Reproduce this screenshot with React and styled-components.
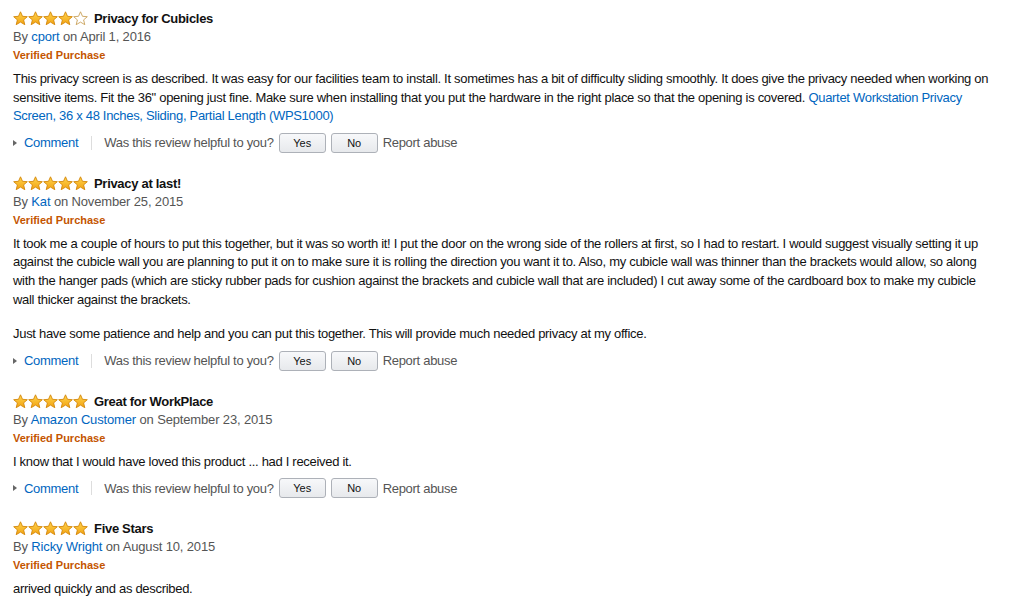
import React from "react";
import styled, { createGlobalStyle } from "styled-components";

const GlobalStyle = createGlobalStyle`
  body {
    margin: 0;
    background: #fff;
    font-family: "Liberation Sans", Arial, sans-serif;
  }
`;

// each paragraph is a list of lines, each line a list of parts (text or link)
const reviews = [
  {
    rating: 4,
    title: "Privacy for Cubicles",
    author: "cport",
    date: "April 1, 2016",
    body: [
      [
        ["This privacy screen is as described. It was easy for our facilities team to install. It sometimes has a bit of difficulty sliding smoothly. It does give the privacy needed when working on"],
        [
          'sensitive items. Fit the 36" opening just fine. Make sure when installing that you put the hardware in the right place so that the opening is covered. ',
          { link: "Quartet Workstation Privacy" },
        ],
        [{ link: "Screen, 36 x 48 Inches, Sliding, Partial Length (WPS1000)" }],
      ],
    ],
  },
  {
    rating: 5,
    title: "Privacy at last!",
    author: "Kat",
    date: "November 25, 2015",
    body: [
      [
        ["It took me a couple of hours to put this together, but it was so worth it! I put the door on the wrong side of the rollers at first, so I had to restart. I would suggest visually setting it up"],
        ["against the cubicle wall you are planning to put it on to make sure it is rolling the direction you want it to. Also, my cubicle wall was thinner than the brackets would allow, so along"],
        ["with the hanger pads (which are sticky rubber pads for cushion against the brackets and cubicle wall that are included) I cut away some of the cardboard box to make my cubicle"],
        ["wall thicker against the brackets."],
      ],
      [["Just have some patience and help and you can put this together. This will provide much needed privacy at my office."]],
    ],
  },
  {
    rating: 5,
    title: "Great for WorkPlace",
    author: "Amazon Customer",
    date: "September 23, 2015",
    body: [[["I know that I would have loved this product ... had I received it."]]],
  },
  {
    rating: 5,
    title: "Five Stars",
    author: "Ricky Wright",
    date: "August 10, 2015",
    body: [[["arrived quickly and as described."]]],
    noActions: true,
  },
];

const STAR = "M7.5 0.8 L9.5 5.3 L14.3 5.7 L10.6 8.9 L11.8 13.7 L7.5 11.1 L3.2 13.7 L4.4 8.9 L0.7 5.7 L5.5 5.3 Z";

function Star({ filled, id }) {
  return (
    <svg width="15" height="15" viewBox="0 0 15 15">
      <defs>
        <linearGradient id={id} x1="0" y1="0" x2="0" y2="1">
          <stop offset="0" stopColor="#ffd54d" />
          <stop offset="1" stopColor="#f2a212" />
        </linearGradient>
      </defs>
      <path
        d={STAR}
        fill={filled ? `url(#${id})` : "#fff"}
        stroke={filled ? "#d4870a" : "#c9a15a"}
        strokeWidth="0.9"
        strokeLinejoin="round"
      />
    </svg>
  );
}

function Stars({ rating, idx }) {
  return (
    <StarRow>
      {[0, 1, 2, 3, 4].map((i) => (
        <Star key={i} filled={i < rating} id={`g${idx}-${i}`} />
      ))}
    </StarRow>
  );
}

function Review({ review, idx }) {
  return (
    <ReviewBox>
      <TitleRow>
        <Stars rating={review.rating} idx={idx} />
        <Title>{review.title}</Title>
      </TitleRow>
      <Byline>
        By <Link href="#">{review.author}</Link> on {review.date}
      </Byline>
      <Verified>Verified Purchase</Verified>
      <Body>
        {review.body.map((para, i) => (
          <Para key={i}>
            {para.map((line, l) => (
              <React.Fragment key={l}>
                {l > 0 && <br />}
                {line.map((part, j) =>
                  typeof part === "string" ? part : <Link key={j} href="#">{part.link}</Link>
                )}
              </React.Fragment>
            ))}
          </Para>
        ))}
      </Body>
      {!review.noActions && (
        <Actions>
          <CommentLink href="#">
            <Caret />
            Comment
          </CommentLink>
          <Separator />
          <Helpful>Was this review helpful to you?</Helpful>
          <VoteButton>Yes</VoteButton>
          <VoteButton>No</VoteButton>
          <Report>Report abuse</Report>
        </Actions>
      )}
    </ReviewBox>
  );
}

export default function App() {
  return (
    <Page>
      <GlobalStyle />
      {reviews.map((r, i) => (
        <Review key={i} review={r} idx={i} />
      ))}
    </Page>
  );
}

const Page = styled.div`
  width: 1024px;
  height: 605px;
  overflow: hidden;
  box-sizing: border-box;
  padding: 9px 8px 0 13px;
  font-size: 13px;
  letter-spacing: -0.3px;
  color: #111;
`;

const ReviewBox = styled.div`
  margin-bottom: 20px;
`;

const TitleRow = styled.div`
  display: flex;
  align-items: center;
  height: 19px;
`;

const StarRow = styled.span`
  display: flex;
  margin-right: 6px;
  svg {
    display: block;
  }
`;

const Title = styled.span`
  font-weight: bold;
  font-size: 13px;
  color: #111;
`;

const Byline = styled.div`
  line-height: 18px;
  letter-spacing: -0.15px;
  color: #555;
`;

const Link = styled.a`
  color: #0066c0;
  text-decoration: none;
`;

const Verified = styled.div`
  line-height: 18px;
  font-size: 11px;
  font-weight: bold;
  letter-spacing: 0;
  color: #c45500;
`;

const Body = styled.div`
  margin-top: 6px;
  line-height: 18.6px;
`;

const Para = styled.p`
  margin: 0;
  & + & {
    margin-top: 16px;
  }
`;

const Actions = styled.div`
  display: flex;
  align-items: center;
  height: 22px;
  margin-top: 6px;
`;

const CommentLink = styled.a`
  display: flex;
  align-items: center;
  color: #0066c0;
  text-decoration: none;
`;

const Caret = styled.span`
  width: 0;
  height: 0;
  margin: 0 7px 0 0;
  border-top: 3px solid transparent;
  border-bottom: 3px solid transparent;
  border-left: 4px solid #666;
`;

const Separator = styled.span`
  width: 1px;
  height: 14px;
  background: #ddd;
  margin: 0 12px 0 13px;
`;

const Helpful = styled.span`
  color: #555;
  margin-right: 5px;
`;

const VoteButton = styled.button`
  width: 47px;
  height: 20px;
  margin-right: 5px;
  padding: 0;
  font-family: inherit;
  font-size: 11px;
  letter-spacing: 0;
  color: #111;
  background: linear-gradient(#f7f8fa, #e7e9ec);
  border: 1px solid #adb1b8;
  border-radius: 3px;
`;

const Report = styled.span`
  color: #555;
`;
